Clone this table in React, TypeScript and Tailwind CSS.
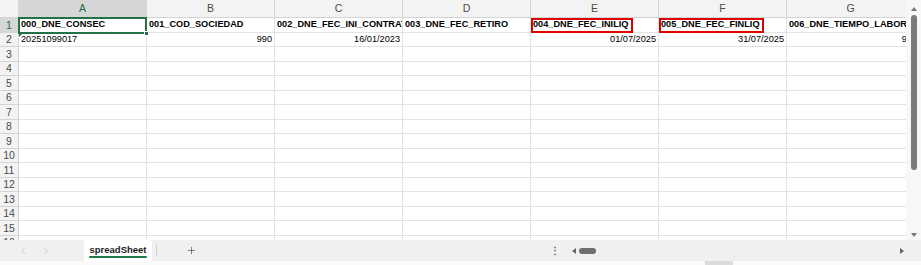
import React from "react";
import { ChevronLeft, ChevronRight, Plus } from "lucide-react";

type Cell = { text: string; bold?: boolean; right?: boolean };

const COLS = ["A", "B", "C", "D", "E", "F", "G"];

const row1: Cell[] = [
  { text: "000_DNE_CONSEC", bold: true },
  { text: "001_COD_SOCIEDAD", bold: true },
  { text: "002_DNE_FEC_INI_CONTRATO", bold: true },
  { text: "003_DNE_FEC_RETIRO", bold: true },
  { text: "004_DNE_FEC_INILIQ", bold: true },
  { text: "005_DNE_FEC_FINLIQ", bold: true },
  { text: "006_DNE_TIEMPO_LABORADO", bold: true },
];

const row2: Cell[] = [
  { text: "20251099017" },
  { text: "990", right: true },
  { text: "16/01/2023", right: true },
  { text: "" },
  { text: "01/07/2025", right: true },
  { text: "31/07/2025", right: true },
  { text: "91", right: true },
];

const emptyRow: Cell[] = COLS.map(() => ({ text: "" }));

const rows: Cell[][] = [row1, row2, ...Array.from({ length: 14 }, () => emptyRow)];

function GridRow({ index, cells }: { index: number; cells: Cell[] }) {
  const active = index === 1;
  return (
    <div className="flex w-max h-[14.5px] flex-none">
      <div
        className={
          "w-[19px] flex-none border-r border-b border-[#d4d4d4] flex items-center justify-center text-[10.5px] leading-none " +
          (active ? "bg-[#d6d6d6] text-[#1e6b3c]" : "bg-[#f3f3f3] text-[#4a4a4a]")
        }
      >
        {index}
      </div>
      {cells.map((c, i) => (
        <div
          key={i}
          className={
            "w-[128px] flex-none border-r border-b border-[#e2e2e2] overflow-hidden whitespace-nowrap flex items-center px-[2px] text-[9.2px] leading-none text-black " +
            (c.right ? "justify-end " : "justify-start ") +
            (c.bold ? "font-bold" : "font-normal")
          }
        >
          {c.text}
        </div>
      ))}
    </div>
  );
}

export default function App() {
  return (
    <div
      className="w-[921px] h-[265px] bg-white overflow-hidden flex flex-col"
      style={{ fontFamily: '"Liberation Sans", Arial, sans-serif' }}
    >
      <div className="flex h-[240px] flex-none">
        {/* sheet grid */}
        <div className="relative w-[906px] h-[240px] overflow-hidden flex flex-col">
          <div className="flex w-max h-[18px] flex-none">
            <div className="w-[19px] flex-none bg-[#f3f3f3] border-r border-b border-[#d4d4d4]" />
            {COLS.map((c, i) => (
              <div
                key={c}
                className={
                  "w-[128px] flex-none border-r border-b border-[#d4d4d4] flex items-center justify-center text-[10.5px] leading-none " +
                  (i === 0 ? "bg-[#d6d6d6] text-[#1e6b3c]" : "bg-[#f3f3f3] text-[#4a4a4a]")
                }
              >
                {c}
              </div>
            ))}
          </div>
          {rows.map((r, i) => (
            <GridRow key={i} index={i + 1} cells={r} />
          ))}

          {/* active cell A1 */}
          <div className="absolute left-[18px] top-[17px] w-[129px] h-[16.5px] border-2 border-[#217346]" />
          <div className="absolute left-[144px] top-[31px] w-[5px] h-[5px] bg-[#217346] border border-white" />
          {/* number-as-text marker on A2 */}
          <div className="absolute left-[19px] top-[33px] w-0 h-0 border-t-[4px] border-t-[#217346] border-r-[4px] border-r-transparent" />

          {/* highlighted headers */}
          <div className="absolute left-[531px] top-[18px] w-[102px] h-[15px] border-2 border-[#e00000]" />
          <div className="absolute left-[659px] top-[18px] w-[105px] h-[15px] border-2 border-[#e00000]" />
        </div>

        {/* vertical scrollbar */}
        <div className="w-[15px] h-[240px] bg-[#f7f7f7] flex flex-col items-center">
          <div className="mt-[7px] w-0 h-0 border-l-[3px] border-l-transparent border-r-[3px] border-r-transparent border-b-[4px] border-b-[#777]" />
          <div className="mt-[4px] w-[6px] h-[155px] rounded-full bg-[#7a7a7a]" />
          <div className="mt-auto mb-[3px] w-0 h-0 border-l-[3px] border-l-transparent border-r-[3px] border-r-transparent border-t-[4px] border-t-[#777]" />
        </div>
      </div>

      {/* sheet tabs bar */}
      <div className="h-[21px] flex-none bg-[#f0f0f0] flex items-stretch relative">
        <div className="flex items-center pl-[18px] gap-[13px] text-[#b0b0b0]">
          <ChevronLeft size={10} strokeWidth={1.5} />
          <ChevronRight size={10} strokeWidth={1.5} />
        </div>
        <div className="ml-[33px] w-[68px] bg-white rounded-t-[3px] flex flex-col items-center justify-center relative">
          <span className="text-[9.5px] font-bold text-[#222] leading-none mt-[-1px]">spreadSheet</span>
          <div className="absolute bottom-[3px] left-[5px] right-[5px] h-[2px] rounded-full bg-[#1e7a46]" />
        </div>
        <div className="ml-[4px] my-[5px] w-px bg-[#cfcfcf]" />
        <div className="ml-[29px] flex items-center text-[#444]">
          <Plus size={11} strokeWidth={1.4} />
        </div>
        <div className="ml-[353px] flex items-center text-[#666] text-[10px] leading-none font-bold">⋮</div>
        <div className="ml-[12px] flex items-center">
          <div className="w-0 h-0 border-t-[3px] border-t-transparent border-b-[3px] border-b-transparent border-r-[4px] border-r-[#666]" />
          <div className="ml-[3px] w-[17px] h-[6px] rounded-full bg-[#6f6f6f]" />
        </div>
        <div className="ml-auto mr-[17px] flex items-center">
          <div className="w-0 h-0 border-t-[3px] border-t-transparent border-b-[3px] border-b-transparent border-l-[4px] border-l-[#666]" />
        </div>
      </div>
      <div className="h-[4px] flex-none bg-[#fafafa] relative">
        <div className="absolute left-[705px] top-0 w-[28px] h-[4px] bg-[#dcdcdc]" />
      </div>
    </div>
  );
}
